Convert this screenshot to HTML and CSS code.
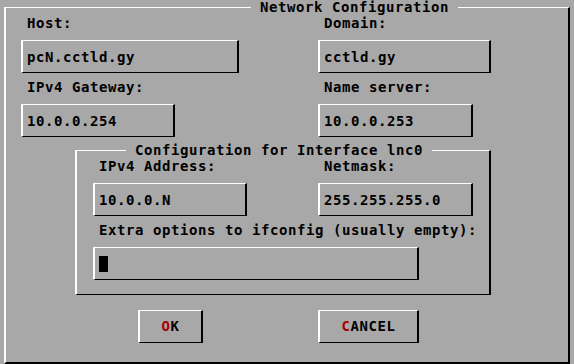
FILE: index.html
```html
<!DOCTYPE html>
<html lang="en">
<head>
  <meta charset="UTF-8">
  <title>Network Configuration</title>
  <link rel="stylesheet" href="styles.css">
</head>
<body>
  <fieldset class="dialog">
    <legend class="title">Network Configuration</legend>
    <div class="grid">
      <div class="field">
        <div class="label">Host:</div>
        <div class="box w-host">pcN.cctld.gy</div>
      </div>
      <div class="field">
        <div class="label">Domain:</div>
        <div class="box w-domain">cctld.gy</div>
      </div>
      <div class="field">
        <div class="label">IPv4 Gateway:</div>
        <div class="box w-gw">10.0.0.254</div>
      </div>
      <div class="field">
        <div class="label">Name server:</div>
        <div class="box w-ns">10.0.0.253</div>
      </div>

      <fieldset class="iface">
        <legend class="title">Configuration for Interface lnc0</legend>
        <div class="grid inner-grid">
          <div class="field">
            <div class="label">IPv4 Address:</div>
            <div class="box w-ip">10.0.0.N</div>
          </div>
          <div class="field">
            <div class="label">Netmask:</div>
            <div class="box w-mask">255.255.255.0</div>
          </div>
          <div class="field wide">
            <div class="label">Extra options to ifconfig (usually empty):</div>
            <div class="box w-extra"><span class="cursor"></span></div>
          </div>
        </div>
      </fieldset>

      <div class="btn btn-ok"><span class="hot">O</span>K</div>
      <div class="btn btn-cancel"><span class="hot">C</span>ANCEL</div>
    </div>
  </fieldset>
</body>
</html>
```

FILE: styles.css
```css
* {
  box-sizing: border-box;
}

body {
  margin: 0;
  background-color: #a8a8a8;
  font-family: "DejaVu Sans Mono", "Liberation Mono", monospace;
  font-weight: bold;
  font-size: 14px;
  letter-spacing: 0.57px;
  color: #000;
}

/* raised frame: light top/left, dark bottom/right */
fieldset,
.box,
.btn {
  border-style: solid;
  border-color: #fff #000 #000 #fff;
  border-width: 1px 2px 1px 2px;
}

fieldset {
  margin: 0;
  min-width: 0;
}

.title {
  padding: 0 9px;
  line-height: 15px;
}

.dialog {
  margin-left: 4px;
  width: 566px;
  padding: 0 0 19px 15px;
  border-bottom-width: 2px;
}

.dialog > .title {
  margin-left: 230px;
}

.grid {
  display: grid;
  grid-template-columns: 297px 1fr;
}

.field {
  margin-bottom: 6px;
}

.label {
  line-height: 16px;
  padding-left: 6px;
  margin-bottom: 9px;
  white-space: pre;
}

.box {
  height: 33px;
  padding-left: 4px;
  display: flex;
  align-items: center;
}

.w-host { width: 218px; }
.w-domain { width: 173px; }
.w-gw { width: 154px; }
.w-ns { width: 155px; }
.w-ip { width: 154px; }
.w-mask { width: 155px; }
.w-extra { width: 326px; }

.iface {
  grid-column: 1 / -1;
  margin-left: 54px;
  width: 416px;
  padding: 0 0 14px 16px;
}

.iface > .title {
  margin-left: 33px;
}

.inner-grid {
  grid-template-columns: 225px 1fr;
}

.wide {
  grid-column: 1 / -1;
  margin-bottom: 0;
}

.cursor {
  display: inline-block;
  width: 9px;
  height: 16px;
  background-color: #000;
}

.btn {
  margin-top: 15px;
  height: 33px;
  line-height: 31px;
  text-align: center;
}

.btn-ok {
  margin-left: 117px;
  width: 65px;
}

.btn-cancel {
  width: 101px;
}

.hot {
  color: #a80000;
}
```
